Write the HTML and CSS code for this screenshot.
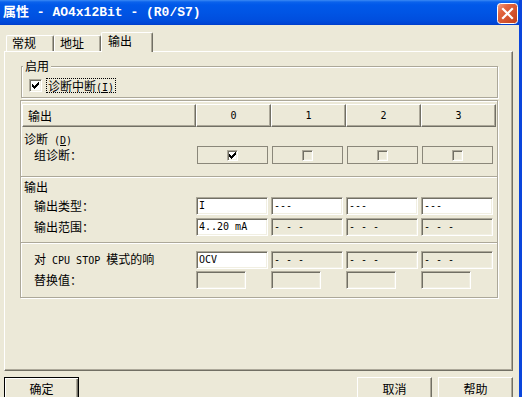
FILE: index.html
```html
<!DOCTYPE html>
<html lang="zh-CN">
<head>
<meta charset="utf-8">
<title>属性 - AO4x12Bit - (R0/S7)</title>
<link rel="stylesheet" href="styles.css">
</head>
<body>
<div class="window">
  <div class="titlebar">
    <span class="title">属性 - AO4x12Bit - (R0/S7)</span>
    <span class="close">
      <svg width="21" height="21" viewBox="0 0 21 21">
        <defs>
          <linearGradient id="cg" x1="0" y1="0" x2="1" y2="1">
            <stop offset="0" stop-color="#f2a68e"/>
            <stop offset="0.3" stop-color="#e2653f"/>
            <stop offset="1" stop-color="#c13e19"/>
          </linearGradient>
        </defs>
        <rect x="0.5" y="0.5" width="20" height="20" rx="3" fill="url(#cg)" stroke="#fff"/>
        <path d="M6 6 L15 15 M15 6 L6 15" stroke="#fff" stroke-width="2.2" stroke-linecap="square"/>
      </svg>
    </span>
  </div>
  <div class="client">
    <div class="tabs">
      <div class="tab t1">常规</div>
      <div class="tab t2">地址</div>
      <div class="tab active">输出</div>
    </div>
    <div class="panel">
      <div class="group">
        <div class="legend">启用</div>
        <div class="check-row">
          <span class="cb on">
            <svg width="9" height="9" viewBox="0 0 9 9" shape-rendering="crispEdges"><path d="M7 1h1v1h-1z M6 2h2v1h-2z M1 3h1v1h-1z M5 3h3v1h-3z M1 4h2v1h-2z M4 4h3v1h-3z M1 5h5v1h-5z M2 6h3v1h-3z M3 7h1v1h-1z" fill="#000"/></svg>
          </span>
          <span class="focus">诊断中断<span class="mono">(<u>I</u>)</span></span>
        </div>
      </div>

      <div class="table">
        <div class="grid hdr">
          <div class="hbtn left">输出</div>
          <div class="hbtn mono">0</div>
          <div class="hbtn mono">1</div>
          <div class="hbtn mono">2</div>
          <div class="hbtn mono">3</div>
        </div>

        <div class="section s1">
          <div class="sec-label">诊断<span class="mono"> (<u>D</u>)</span></div>
          <div class="grid row">
            <div class="lbl">组诊断：</div>
            <div class="cell">
              <span class="cb small on">
                <svg width="7" height="7" viewBox="0 0 7 7" shape-rendering="crispEdges"><path d="M6 0h1v1h-1z M5 1h2v1h-2z M0 2h1v1h-1z M4 2h3v1h-3z M0 3h2v1h-2z M3 3h3v1h-3z M0 4h5v1h-5z M1 5h3v1h-3z M2 6h1v1h-1z" fill="#000"/></svg>
              </span>
            </div>
            <div class="cell"><span class="cb small off"></span></div>
            <div class="cell"><span class="cb small off"></span></div>
            <div class="cell"><span class="cb small off"></span></div>
          </div>
        </div>

        <div class="sep"></div>

        <div class="section s2">
          <div class="sec-label">输出</div>
          <div class="stack">
            <div class="grid row">
              <div class="lbl">输出类型：</div>
              <div class="field on">I</div>
              <div class="field on">---</div>
              <div class="field on">---</div>
              <div class="field on">---</div>
            </div>
            <div class="grid row">
              <div class="lbl">输出范围：</div>
              <div class="field on">4..20 mA</div>
              <div class="field">- - -</div>
              <div class="field">- - -</div>
              <div class="field">- - -</div>
            </div>
          </div>
        </div>

        <div class="sep"></div>

        <div class="section s3">
          <div class="stack">
            <div class="grid row">
              <div class="lbl">对<span class="mono"> CPU STOP </span>模式的响</div>
              <div class="field on">OCV</div>
              <div class="field">- - -</div>
              <div class="field">- - -</div>
              <div class="field">- - -</div>
            </div>
            <div class="grid row">
              <div class="lbl">替换值：</div>
              <div class="field short"></div>
              <div class="field short"></div>
              <div class="field short"></div>
              <div class="field short"></div>
            </div>
          </div>
        </div>
      </div>
    </div>

    <div class="buttons">
      <div class="btn default">确定</div>
      <div class="btn">取消</div>
      <div class="btn">帮助</div>
    </div>
  </div>
</div>
</body>
</html>
```
FILE: styles.css
```css
* { box-sizing: border-box; }
html, body { margin: 0; padding: 0; }
body {
  width: 522px;
  height: 397px;
  overflow: hidden;
  background: #ece9d8;
  font-family: "Noto Sans CJK SC", "Noto Sans", sans-serif;
  font-size: 12px;
  color: #000;
}
.mono {
  font-family: "DejaVu Sans Mono", monospace;
  font-size: 10px;
}
.window {
  width: 522px;
  height: 397px;
  border-right: 3px solid #0a45dc;
  display: flex;
  flex-direction: column;
}
.titlebar {
  height: 25px;
  flex: none;
  display: flex;
  align-items: flex-start;
  padding-left: 3px;
  background: linear-gradient(to bottom, #3b8af4 0px, #0a62ec 2px, #0058e9 5px, #0055e5 12px, #004ede 20px, #0044d4 24px, #003bc6 25px);
}
.title {
  color: #fff;
  font-family: "Liberation Mono", "Noto Sans CJK SC", monospace;
  font-weight: bold;
  font-size: 13px;
  line-height: 15px;
  margin-top: 5px;
  white-space: pre;
}
.close {
  margin-left: auto;
  margin-right: 1px;
  margin-top: 3px;
  width: 21px;
  height: 21px;
  display: block;
}
.close svg { display: block; }
.client {
  flex: 1;
  display: flex;
  flex-direction: column;
}
.tabs {
  display: flex;
  align-items: flex-end;
  height: 19px;
  margin: 7px 0 0 6px;
}
.tab {
  height: 16px;
  line-height: 13px;
  padding-left: 5px;
  background: #ece9d8;
  border-top: 1px solid #fff;
  border-left: 1px solid #fff;
  border-right: 1px solid #716f64;
  box-shadow: inset -1px 0 #aca899;
  border-radius: 2px 2px 0 0;
  white-space: nowrap;
}
.t1 { width: 48px; }
.t2 { width: 47px; }
.tab.active {
  width: 52px;
  height: 20px;
  margin-bottom: -1px;
  padding-left: 6px;
  padding-top: 1px;
  position: relative;
  z-index: 1;
}
.panel {
  margin-left: 4px;
  width: 509px;
  height: 320px;
  border: 1px solid;
  border-color: #fff #716f64 #716f64 #fff;
  box-shadow: inset -1px -1px #aca899;
  padding: 14px 0 0 15px;
}
.group {
  margin-left: 1px;
  width: 477px;
  height: 32px;
  border: 1px solid #aca899;
  box-shadow: inset 1px 1px #fff, 1px 1px #fff;
}
.legend {
  width: fit-content;
  margin: -8px 0 0 1px;
  padding: 0 2px;
  line-height: 14px;
  background: #ece9d8;
}
.check-row {
  display: flex;
  align-items: center;
  height: 15px;
  margin: 5px 0 0 7px;
}
.cb {
  width: 13px;
  height: 13px;
  border: 1px solid;
  border-color: #aca899 #fff #fff #aca899;
  box-shadow: inset 1px 1px #716f64, inset -1px -1px #f1efe2;
  background: #fff;
  display: flex;
  align-items: center;
  justify-content: center;
  flex: none;
}
.cb svg { display: block; }
.cb.small { width: 11px; height: 11px; }
.cb.off { background: #ece9d8; }
.focus {
  margin-left: 4px;
  border: 1px dotted #000;
  padding: 0 1px;
  height: 15px;
  line-height: 13px;
  white-space: nowrap;
}
.table {
  margin-top: 2px;
  width: 478px;
  border: 1px solid #aca899;
  box-shadow: inset 1px 1px #fff, 1px 1px #fff;
  padding: 3px 1px 0 1px;
}
.grid {
  display: grid;
  grid-template-columns: 174px repeat(4, 75px);
}
.hdr { height: 23px; }
.hbtn {
  border: 1px solid;
  border-color: #fff #716f64 #716f64 #fff;
  box-shadow: inset -1px -1px #aca899;
  display: flex;
  align-items: center;
  justify-content: center;
}
.hbtn.left {
  justify-content: flex-start;
  padding-left: 5px;
}
.s1 { padding: 6px 0 12px; }
.s2 { padding: 3px 0 6px; }
.s3 { padding: 6px 0 8px; }
.sec-label {
  padding-left: 2px;
  height: 12px;
  line-height: 12px;
  white-space: nowrap;
}
.s1 .sec-label { height: 13px; }
.s2 .sec-label { margin-bottom: 4px; }
.stack {
  display: flex;
  flex-direction: column;
  gap: 3px;
}
.row {
  height: 18px;
  align-items: center;
}
.lbl {
  padding-left: 12px;
  line-height: 18px;
  white-space: nowrap;
}
.sep {
  height: 2px;
  margin: 0 -1px;
  border-top: 1px solid #aca899;
  border-bottom: 1px solid #fff;
}
.cell {
  margin-left: 1px;
  width: 71px;
  height: 18px;
  border: 1px solid #8a877a;
  display: flex;
  align-items: center;
  justify-content: center;
}
.field {
  width: 72px;
  height: 18px;
  border: 1px solid;
  border-color: #aca899 #fff #fff #aca899;
  box-shadow: inset 1px 1px #716f64, inset -1px -1px #f1efe2;
  background: #ece9d8;
  padding-left: 2px;
  line-height: 16px;
  font-family: "DejaVu Sans Mono", monospace;
  font-size: 10px;
  white-space: pre;
}
.field.on { background: #fff; }
.field.short { width: 50px; }
.buttons {
  display: flex;
  margin-top: 6px;
  padding: 0 6px 0 4px;
  gap: 6px;
}
.btn {
  width: 75px;
  height: 23px;
  flex: none;
  border: 1px solid;
  border-color: #fff #716f64 #716f64 #fff;
  box-shadow: inset -1px -1px #aca899;
  display: flex;
  align-items: center;
  justify-content: center;
}
.btn.default {
  margin-right: auto;
  border: 1px solid #000;
  box-shadow: inset 1px 1px #fff, inset -1px -1px #716f64, inset -2px -2px #aca899;
}
```
